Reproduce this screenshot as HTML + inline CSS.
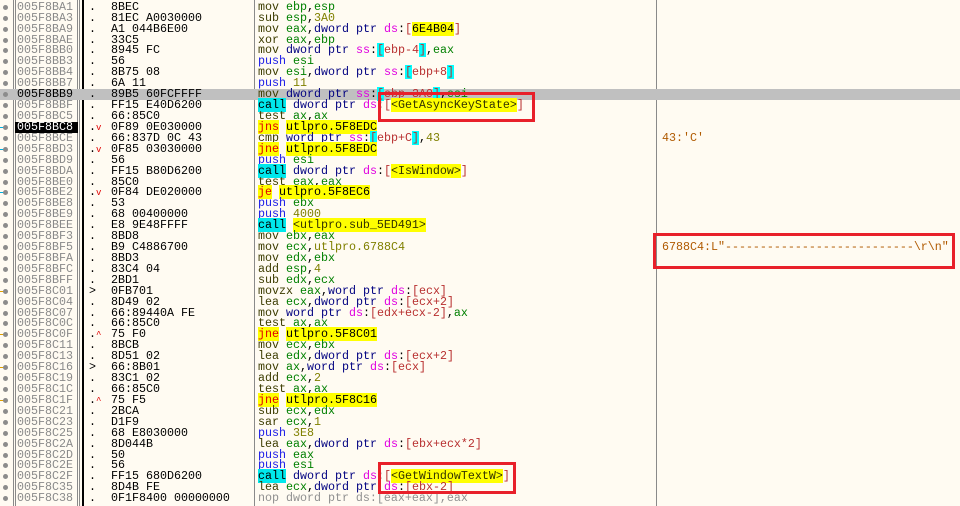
<!DOCTYPE html>
<html><head><meta charset="utf-8"><style>
html,body{margin:0;padding:0;}
body{width:960px;height:506px;overflow:hidden;background:#fffbf2;position:relative;font-family:"Liberation Mono",monospace;font-size:11.67px;}
.row{position:absolute;left:0;width:960px;height:10.92px;line-height:10.92px;white-space:pre;}
.hl{background:#c0c0c0;}
.dot{position:absolute;left:3px;top:3px;width:5px;height:5px;border-radius:50%;background:#8c8c8c;}
.ad{position:absolute;left:17px;color:#8a8a8a;}
.sel{position:absolute;left:15px;width:63px;height:10.92px;background:#000;}
.sel + .ad{color:#fff;}
.mk{position:absolute;left:89px;color:#000;}
.mk i{font-style:normal;color:#e00000;font-size:9px;}
.by{position:absolute;left:111px;color:#000;}
.ds{position:absolute;left:258px;}
.cm{position:absolute;left:662px;color:#b05a00;}
.m{color:#3c3c00}.r{color:#008000}.p{color:#000080}.s{color:#e000e0}.n{color:#808000}.b{color:#b83030}
.cb{background:#00ffff;color:#b83030}.pu{color:#1a1ae8}.ca{background:#00e8ec;color:#000}
.j{background:#ffff00;color:#e00000}.jt{background:#ffff00;color:#000}.lb{background:#ffff00;color:#333300}
.no{color:#909090}
.vl{position:absolute;top:0;height:506px;width:1px;background:#8a8a8a;}
.box{position:absolute;border:3px solid #e8202a;box-sizing:border-box;}
.stub{position:absolute;left:0;top:5px;width:4px;height:1px;}
</style></head><body>
<div class="vl" style="left:13px"></div><div class="vl" style="left:15px"></div>
<div class="vl" style="left:77px"></div><div class="vl" style="left:79px"></div>
<div class="vl" style="left:82px;width:2px;background:#000"></div>
<div class="vl" style="left:254px"></div>
<div class="vl" style="left:656px"></div>

<div class="row" style="top:1.8px"><div class="dot"></div><span class="ad">005F8BA1</span><span class="mk">.</span><span class="by">8BEC</span><span class="ds"><span class="m">mov</span> <span class="r">ebp</span>,<span class="r">esp</span></span></div>
<div class="row" style="top:12.72px"><div class="dot"></div><span class="ad">005F8BA3</span><span class="mk">.</span><span class="by">81EC A0030000</span><span class="ds"><span class="m">sub</span> <span class="r">esp</span>,<span class="n">3A0</span></span></div>
<div class="row" style="top:23.64px"><div class="dot"></div><span class="ad">005F8BA9</span><span class="mk">.</span><span class="by">A1 044B6E00</span><span class="ds"><span class="m">mov</span> <span class="r">eax</span>,<span class="p">dword ptr</span> <span class="s">ds</span>:<span class="b">[</span><span class="jt">6E4B04</span><span class="b">]</span></span></div>
<div class="row" style="top:34.56px"><div class="dot"></div><span class="ad">005F8BAE</span><span class="mk">.</span><span class="by">33C5</span><span class="ds"><span class="m">xor</span> <span class="r">eax</span>,<span class="r">ebp</span></span></div>
<div class="row" style="top:45.48px"><div class="dot"></div><span class="ad">005F8BB0</span><span class="mk">.</span><span class="by">8945 FC</span><span class="ds"><span class="m">mov</span> <span class="p">dword ptr</span> <span class="s">ss</span>:<span class="cb">[</span><span class="b">ebp-4</span><span class="cb">]</span>,<span class="r">eax</span></span></div>
<div class="row" style="top:56.4px"><div class="dot"></div><span class="ad">005F8BB3</span><span class="mk">.</span><span class="by">56</span><span class="ds"><span class="pu">push</span> <span class="r">esi</span></span></div>
<div class="row" style="top:67.32px"><div class="dot"></div><span class="ad">005F8BB4</span><span class="mk">.</span><span class="by">8B75 08</span><span class="ds"><span class="m">mov</span> <span class="r">esi</span>,<span class="p">dword ptr</span> <span class="s">ss</span>:<span class="cb">[</span><span class="b">ebp+8</span><span class="cb">]</span></span></div>
<div class="row" style="top:78.24px"><div class="dot"></div><span class="ad">005F8BB7</span><span class="mk">.</span><span class="by">6A 11</span><span class="ds"><span class="pu">push</span> <span class="n">11</span></span></div>
<div class="row hl" style="top:89.16px"><div class="dot"></div><span class="ad" style="color:#000">005F8BB9</span><span class="mk">.</span><span class="by">89B5 60FCFFFF</span><span class="ds"><span class="m">mov</span> <span class="p">dword ptr</span> <span class="s">ss</span>:<span class="cb">[</span><span class="b">ebp-3A0</span><span class="cb">]</span>,<span class="r">esi</span></span></div>
<div class="row" style="top:100.08px"><div class="dot"></div><span class="ad">005F8BBF</span><span class="mk">.</span><span class="by">FF15 E40D6200</span><span class="ds"><span class="ca">call</span> <span class="p">dword ptr</span> <span class="s">ds</span>:<span class="b">[</span><span class="lb">&lt;GetAsyncKeyState&gt;</span><span class="b">]</span></span></div>
<div class="row" style="top:111px"><div class="dot"></div><span class="ad">005F8BC5</span><span class="mk">.</span><span class="by">66:85C0</span><span class="ds"><span class="m">test</span> <span class="r">ax</span>,<span class="r">ax</span></span></div>
<div class="row" style="top:121.92px"><div class="stub" style="background:#00b0e0"></div><div class="dot"></div><div class="sel"></div><span class="ad">005F8BC8</span><span class="mk">.<i>v</i></span><span class="by">0F89 0E030000</span><span class="ds"><span class="j">jns</span> <span class="jt">utlpro.5F8EDC</span></span></div>
<div class="row" style="top:132.84px"><div class="dot"></div><span class="ad">005F8BCE</span><span class="mk">.</span><span class="by">66:837D 0C 43</span><span class="ds"><span class="m">cmp</span> <span class="p">word ptr</span> <span class="s">ss</span>:<span class="cb">[</span><span class="b">ebp+C</span><span class="cb">]</span>,<span class="n">43</span></span><span class="cm">43:'C'</span></div>
<div class="row" style="top:143.76px"><div class="stub" style="background:#00b0e0"></div><div class="dot"></div><span class="ad">005F8BD3</span><span class="mk">.<i>v</i></span><span class="by">0F85 03030000</span><span class="ds"><span class="j">jne</span> <span class="jt">utlpro.5F8EDC</span></span></div>
<div class="row" style="top:154.68px"><div class="dot"></div><span class="ad">005F8BD9</span><span class="mk">.</span><span class="by">56</span><span class="ds"><span class="pu">push</span> <span class="r">esi</span></span></div>
<div class="row" style="top:165.6px"><div class="dot"></div><span class="ad">005F8BDA</span><span class="mk">.</span><span class="by">FF15 B80D6200</span><span class="ds"><span class="ca">call</span> <span class="p">dword ptr</span> <span class="s">ds</span>:<span class="b">[</span><span class="lb">&lt;IsWindow&gt;</span><span class="b">]</span></span></div>
<div class="row" style="top:176.52px"><div class="dot"></div><span class="ad">005F8BE0</span><span class="mk">.</span><span class="by">85C0</span><span class="ds"><span class="m">test</span> <span class="r">eax</span>,<span class="r">eax</span></span></div>
<div class="row" style="top:187.44px"><div class="stub" style="background:#00b0e0"></div><div class="dot"></div><span class="ad">005F8BE2</span><span class="mk">.<i>v</i></span><span class="by">0F84 DE020000</span><span class="ds"><span class="j">je</span> <span class="jt">utlpro.5F8EC6</span></span></div>
<div class="row" style="top:198.36px"><div class="dot"></div><span class="ad">005F8BE8</span><span class="mk">.</span><span class="by">53</span><span class="ds"><span class="pu">push</span> <span class="r">ebx</span></span></div>
<div class="row" style="top:209.28px"><div class="dot"></div><span class="ad">005F8BE9</span><span class="mk">.</span><span class="by">68 00400000</span><span class="ds"><span class="pu">push</span> <span class="n">4000</span></span></div>
<div class="row" style="top:220.2px"><div class="dot"></div><span class="ad">005F8BEE</span><span class="mk">.</span><span class="by">E8 9E48FFFF</span><span class="ds"><span class="ca">call</span> <span class="lb">&lt;utlpro.sub_5ED491&gt;</span></span></div>
<div class="row" style="top:231.12px"><div class="dot"></div><span class="ad">005F8BF3</span><span class="mk">.</span><span class="by">8BD8</span><span class="ds"><span class="m">mov</span> <span class="r">ebx</span>,<span class="r">eax</span></span></div>
<div class="row" style="top:242.04px"><div class="dot"></div><span class="ad">005F8BF5</span><span class="mk">.</span><span class="by">B9 C4886700</span><span class="ds"><span class="m">mov</span> <span class="r">ecx</span>,<span class="n">utlpro.6788C4</span></span><span class="cm">6788C4:L"---------------------------\r\n"</span></div>
<div class="row" style="top:252.96px"><div class="dot"></div><span class="ad">005F8BFA</span><span class="mk">.</span><span class="by">8BD3</span><span class="ds"><span class="m">mov</span> <span class="r">edx</span>,<span class="r">ebx</span></span></div>
<div class="row" style="top:263.88px"><div class="dot"></div><span class="ad">005F8BFC</span><span class="mk">.</span><span class="by">83C4 04</span><span class="ds"><span class="m">add</span> <span class="r">esp</span>,<span class="n">4</span></span></div>
<div class="row" style="top:274.8px"><div class="dot"></div><span class="ad">005F8BFF</span><span class="mk">.</span><span class="by">2BD1</span><span class="ds"><span class="m">sub</span> <span class="r">edx</span>,<span class="r">ecx</span></span></div>
<div class="row" style="top:285.72px"><div class="stub" style="background:#e0a000"></div><div class="dot"></div><span class="ad">005F8C01</span><span class="mk">&gt;</span><span class="by">0FB701</span><span class="ds"><span class="m">movzx</span> <span class="r">eax</span>,<span class="p">word ptr</span> <span class="s">ds</span>:<span class="b">[ecx]</span></span></div>
<div class="row" style="top:296.64px"><div class="dot"></div><span class="ad">005F8C04</span><span class="mk">.</span><span class="by">8D49 02</span><span class="ds"><span class="m">lea</span> <span class="r">ecx</span>,<span class="p">dword ptr</span> <span class="s">ds</span>:<span class="b">[ecx+2]</span></span></div>
<div class="row" style="top:307.56px"><div class="dot"></div><span class="ad">005F8C07</span><span class="mk">.</span><span class="by">66:89440A FE</span><span class="ds"><span class="m">mov</span> <span class="p">word ptr</span> <span class="s">ds</span>:<span class="b">[edx+ecx-2]</span>,<span class="r">ax</span></span></div>
<div class="row" style="top:318.48px"><div class="dot"></div><span class="ad">005F8C0C</span><span class="mk">.</span><span class="by">66:85C0</span><span class="ds"><span class="m">test</span> <span class="r">ax</span>,<span class="r">ax</span></span></div>
<div class="row" style="top:329.4px"><div class="stub" style="background:#e0a000"></div><div class="dot"></div><span class="ad">005F8C0F</span><span class="mk">.<i>^</i></span><span class="by">75 F0</span><span class="ds"><span class="j">jne</span> <span class="jt">utlpro.5F8C01</span></span></div>
<div class="row" style="top:340.32px"><div class="dot"></div><span class="ad">005F8C11</span><span class="mk">.</span><span class="by">8BCB</span><span class="ds"><span class="m">mov</span> <span class="r">ecx</span>,<span class="r">ebx</span></span></div>
<div class="row" style="top:351.24px"><div class="dot"></div><span class="ad">005F8C13</span><span class="mk">.</span><span class="by">8D51 02</span><span class="ds"><span class="m">lea</span> <span class="r">edx</span>,<span class="p">dword ptr</span> <span class="s">ds</span>:<span class="b">[ecx+2]</span></span></div>
<div class="row" style="top:362.16px"><div class="stub" style="background:#e0a000"></div><div class="dot"></div><span class="ad">005F8C16</span><span class="mk">&gt;</span><span class="by">66:8B01</span><span class="ds"><span class="m">mov</span> <span class="r">ax</span>,<span class="p">word ptr</span> <span class="s">ds</span>:<span class="b">[ecx]</span></span></div>
<div class="row" style="top:373.08px"><div class="dot"></div><span class="ad">005F8C19</span><span class="mk">.</span><span class="by">83C1 02</span><span class="ds"><span class="m">add</span> <span class="r">ecx</span>,<span class="n">2</span></span></div>
<div class="row" style="top:384px"><div class="dot"></div><span class="ad">005F8C1C</span><span class="mk">.</span><span class="by">66:85C0</span><span class="ds"><span class="m">test</span> <span class="r">ax</span>,<span class="r">ax</span></span></div>
<div class="row" style="top:394.92px"><div class="stub" style="background:#e0a000"></div><div class="dot"></div><span class="ad">005F8C1F</span><span class="mk">.<i>^</i></span><span class="by">75 F5</span><span class="ds"><span class="j">jne</span> <span class="jt">utlpro.5F8C16</span></span></div>
<div class="row" style="top:405.84px"><div class="dot"></div><span class="ad">005F8C21</span><span class="mk">.</span><span class="by">2BCA</span><span class="ds"><span class="m">sub</span> <span class="r">ecx</span>,<span class="r">edx</span></span></div>
<div class="row" style="top:416.76px"><div class="dot"></div><span class="ad">005F8C23</span><span class="mk">.</span><span class="by">D1F9</span><span class="ds"><span class="m">sar</span> <span class="r">ecx</span>,<span class="n">1</span></span></div>
<div class="row" style="top:427.68px"><div class="dot"></div><span class="ad">005F8C25</span><span class="mk">.</span><span class="by">68 E8030000</span><span class="ds"><span class="pu">push</span> <span class="n">3E8</span></span></div>
<div class="row" style="top:438.6px"><div class="dot"></div><span class="ad">005F8C2A</span><span class="mk">.</span><span class="by">8D044B</span><span class="ds"><span class="m">lea</span> <span class="r">eax</span>,<span class="p">dword ptr</span> <span class="s">ds</span>:<span class="b">[ebx+ecx*2]</span></span></div>
<div class="row" style="top:449.52px"><div class="dot"></div><span class="ad">005F8C2D</span><span class="mk">.</span><span class="by">50</span><span class="ds"><span class="pu">push</span> <span class="r">eax</span></span></div>
<div class="row" style="top:460.44px"><div class="dot"></div><span class="ad">005F8C2E</span><span class="mk">.</span><span class="by">56</span><span class="ds"><span class="pu">push</span> <span class="r">esi</span></span></div>
<div class="row" style="top:471.36px"><div class="dot"></div><span class="ad">005F8C2F</span><span class="mk">.</span><span class="by">FF15 680D6200</span><span class="ds"><span class="ca">call</span> <span class="p">dword ptr</span> <span class="s">ds</span>:<span class="b">[</span><span class="lb">&lt;GetWindowTextW&gt;</span><span class="b">]</span></span></div>
<div class="row" style="top:482.28px"><div class="dot"></div><span class="ad">005F8C35</span><span class="mk">.</span><span class="by">8D4B FE</span><span class="ds"><span class="m">lea</span> <span class="r">ecx</span>,<span class="p">dword ptr</span> <span class="s">ds</span>:<span class="b">[ebx-2]</span></span></div>
<div class="row" style="top:493.2px"><div class="dot"></div><span class="ad">005F8C38</span><span class="mk">.</span><span class="by">0F1F8400 00000000</span><span class="ds no">nop dword ptr ds:[eax+eax],eax</span></div>

<div class="box" style="left:378px;top:92px;width:157px;height:30px"></div>
<div class="box" style="left:653px;top:233px;width:302px;height:36px"></div>
<div class="box" style="left:378px;top:462px;width:138px;height:32px"></div>
</body></html>
